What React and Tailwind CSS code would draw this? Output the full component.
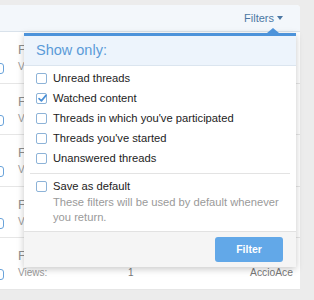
import React from "react";

const rows = [
  { title: "Filter test one", views: "1", user: "AccioAce" },
  { title: "Filter test two", views: "1", user: "AccioAce" },
  { title: "Filter test three", views: "1", user: "AccioAce" },
  { title: "Filter test four", views: "1", user: "AccioAce" },
  { title: "Filter test five", views: "1", user: "AccioAce" },
];

const options = [
  { label: "Unread threads", checked: false },
  { label: "Watched content", checked: true },
  { label: "Threads in which you've participated", checked: false },
  { label: "Threads you've started", checked: false },
  { label: "Unanswered threads", checked: false },
];

function Box({ checked }) {
  return (
    <span className="relative w-[11px] h-[11px] shrink-0 rounded-[2px] border border-[#8db3d8] bg-white">
      {checked && (
        <svg viewBox="0 0 12 12" className="absolute left-[0px] top-[-1px] w-[11px] h-[11px]">
          <path d="M2.2 6.2 L4.8 8.6 L9.8 2.6" fill="none" stroke="#4a8fd6" strokeWidth="1.8" strokeLinecap="round" strokeLinejoin="round" />
        </svg>
      )}
    </span>
  );
}

export default function App() {
  return (
    <div
      className="relative w-[314px] h-[300px] overflow-hidden bg-[#ececec] pt-[5px]"
      style={{ fontFamily: '"Liberation Sans", Arial, sans-serif' }}
    >
      <div className="w-[300px] bg-white rounded-tr-[4px]">
        <div className="h-[27px] flex items-center justify-end pr-[17px] bg-[#f3f7fb] border-b border-[#d9e2eb] rounded-tr-[4px]">
          <span className="text-[11px] text-[#4b77a3]">Filters</span>
          <span className="ml-[3px] w-0 h-0 border-l-[3.5px] border-r-[3.5px] border-t-[4px] border-l-transparent border-r-transparent border-t-[#4b77a3]" />
        </div>
        {rows.map((r, i) => (
          <div key={i} className="relative h-[51.5px] border-b border-[#e6e6e6]">
            <span className="absolute left-[-7px] top-[31px] w-[11px] h-[11px] rounded-[3px] border border-[#6aa3da]" />
            <div className="pl-[18px] pt-[10px] text-[13px] leading-[16px] text-[#8f8f8f] whitespace-nowrap">{r.title}</div>
            <div className="flex items-center pl-[18px] pr-[7px] mt-[2px] text-[10px] leading-[14px] text-[#9a9a9a]">
              <span className="w-[110px]">Views:</span>
              <span className="text-[#777]">{r.views}</span>
              <span className="ml-auto text-[#777] text-[10.3px]">{r.user}</span>
            </div>
          </div>
        ))}
      </div>

      <div className="absolute left-[24px] top-[33px] w-[272px] bg-white border-t-[3px] border-[#4d93da] shadow-[0_2px_7px_rgba(0,0,0,0.22)]">
        <span className="absolute right-[17px] top-[-8px] w-0 h-0 border-l-[6px] border-r-[6px] border-b-[5px] border-l-transparent border-r-transparent border-b-[#4d93da]" />
        <div className="h-[30px] flex items-center pl-[12px] bg-[#edf4fc] border-b border-[#dbe5ef] text-[14.5px] text-[#5b9bd8]">
          Show only:
        </div>
        <div className="pt-[2px] pb-[5px]">
          {options.map((o, i) => (
            <div key={i} className="h-[20px] flex items-center pl-[12px] gap-[6px] text-[11.2px] text-[#222]">
              <Box checked={o.checked} />
              <span>{o.label}</span>
            </div>
          ))}
        </div>
        <div className="mx-[6px] border-t border-[#e3e3e3]" />
        <div className="pt-[2px] pb-[6px]">
          <div className="h-[20px] flex items-center pl-[12px] gap-[6px] text-[11.2px] text-[#222]">
            <Box checked={false} />
            <span>Save as default</span>
          </div>
          <div className="-mt-[1px] pl-[29px] pr-[12px] text-[11.2px] leading-[15px] text-[#9a9a9a]">
            These filters will be used by default whenever you return.
          </div>
        </div>
        <div className="h-[36px] flex items-center justify-end pr-[13px] bg-[#f5f5f5] border-t border-[#e2e2e2]">
          <button className="w-[68px] h-[25px] rounded-[3px] bg-[#62a8e8] text-white text-[10.5px] font-bold">
            Filter
          </button>
        </div>
      </div>
    </div>
  );
}
